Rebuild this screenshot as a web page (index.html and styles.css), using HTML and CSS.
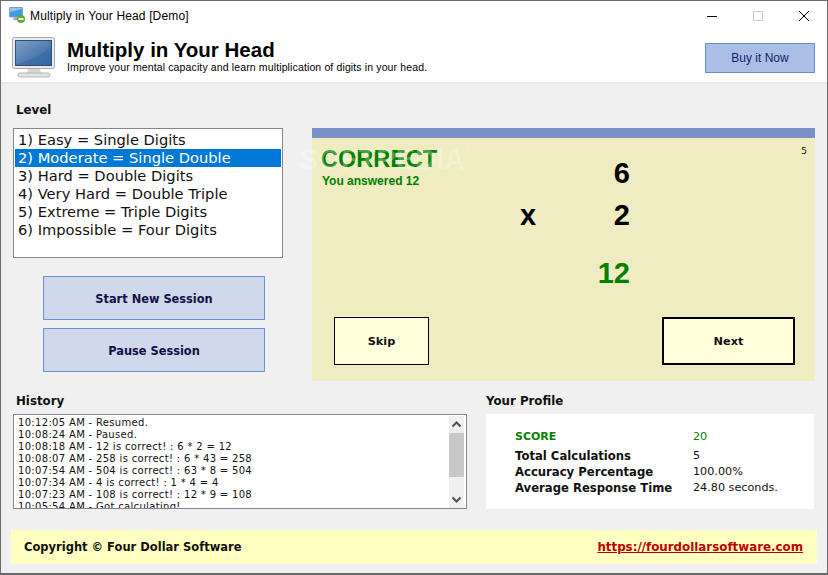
FILE: index.html
```html
<!DOCTYPE html>
<html lang="en">
<head>
<meta charset="utf-8">
<title>Multiply in Your Head [Demo]</title>
<link rel="stylesheet" href="styles.css">
</head>
<body>
<div class="window">
  <div class="titlebar">
    <svg class="app-icon" width="20" height="20" viewBox="0 0 20 20">
      <rect x="0" y="1" width="14" height="10.5" rx="1" fill="#8e9aa8"/>
      <rect x="1" y="2" width="12" height="8.5" fill="#3f9ae8"/>
      <path d="M1 6 L13 3 V2 H1Z" fill="#8cc4f2"/>
      <path d="M5 11.5H10L11 14H4Z" fill="#9aa4ae"/>
      <circle cx="12" cy="13" r="4" fill="#5fae2e"/>
      <rect x="9.5" y="12" width="5" height="2" fill="#fff"/>
    </svg>
    <span class="title-text">Multiply in Your Head [Demo]</span>
    <div class="win-controls">
      <svg width="12" height="12" viewBox="0 0 12 12"><path d="M1 6.5H11" stroke="#000" stroke-width="1"/></svg>
      <svg width="12" height="12" viewBox="0 0 12 12"><rect x="1.5" y="1.5" width="9" height="9" fill="none" stroke="#ccc"/></svg>
      <svg width="12" height="12" viewBox="0 0 12 12"><path d="M1 1L11 11M11 1L1 11" stroke="#000" stroke-width="1"/></svg>
    </div>
  </div>
  <header class="header">
    <svg class="monitor" width="44" height="42" viewBox="0 0 44 42">
      <defs>
        <linearGradient id="scr" x1="0" y1="0" x2="1" y2="1">
          <stop offset="0" stop-color="#7fa2c8"/>
          <stop offset="1" stop-color="#2d5f9c"/>
        </linearGradient>
      </defs>
      <rect x="0.5" y="0.5" width="42" height="31" rx="2" fill="#ececec" stroke="#a8a8a8"/>
      <rect x="3.5" y="3.5" width="36" height="25" fill="url(#scr)" stroke="#2c4f7e"/>
      <path d="M4 27 C18 24 30 18 39 10 V28 H4Z" fill="#3a6ba8" opacity=".7"/>
      <path d="M16 32H28L29 36H15Z" fill="#d8d8d8"/>
      <rect x="6" y="36" width="32" height="4" rx="2" fill="#e4e4e4" stroke="#b4b4b4"/>
    </svg>
    <div class="head-text">
      <h1 class="app-name">Multiply in Your Head</h1>
      <p class="tagline">Improve your mental capacity and learn multiplication of digits in your head.</p>
    </div>
    <button class="buy">Buy it Now</button>
  </header>
  <main class="content">
    <section class="top">
      <div class="left">
        <h2 class="label level-label">Level</h2>
        <ul class="levels">
          <li>1) Easy = Single Digits</li>
          <li class="selected">2) Moderate = Single Double</li>
          <li>3) Hard = Double Digits</li>
          <li>4) Very Hard = Double Triple</li>
          <li>5) Extreme = Triple Digits</li>
          <li>6) Impossible = Four Digits</li>
        </ul>
        <div class="session">
          <button class="session-btn">Start New Session</button>
          <button class="session-btn">Pause Session</button>
        </div>
      </div>
      <div class="game">
        <div class="game-bar"></div>
        <div class="game-body">
          <div class="count">5</div>
          <div class="result">
            <div class="correct">CORRECT</div>
            <div class="answered">You answered 12</div>
          </div>
          <div class="sum">
            <span class="n top-n">6</span>
            <span class="op">x</span>
            <span class="n mid-n">2</span>
            <span class="n answer">12</span>
          </div>
          <div class="game-actions">
            <button class="skip">Skip</button>
            <button class="next">Next</button>
          </div>
          <div class="watermark">SOFTPEDIA<sup class="reg">®</sup></div>
        </div>
      </div>
    </section>
    <section class="bottom">
      <div class="history">
        <h2 class="label">History</h2>
        <div class="log">
          <div class="log-lines">
            <div>10:12:05 AM - Resumed.</div>
            <div>10:08:24 AM - Paused.</div>
            <div>10:08:18 AM - 12 is correct! : 6 * 2 = 12</div>
            <div>10:08:07 AM - 258 is correct! : 6 * 43 = 258</div>
            <div>10:07:54 AM - 504 is correct! : 63 * 8 = 504</div>
            <div>10:07:34 AM - 4 is correct! : 1 * 4 = 4</div>
            <div>10:07:23 AM - 108 is correct! : 12 * 9 = 108</div>
            <div>10:05:54 AM - Got calculating!</div>
          </div>
          <div class="scrollbar">
            <svg width="15" height="17" viewBox="0 0 15 17"><path d="M3.5 10.5L7.5 6.5L11.5 10.5" fill="none" stroke="#505050" stroke-width="2"/></svg>
            <div class="thumb"></div>
            <svg class="down" width="15" height="17" viewBox="0 0 15 17"><path d="M3.5 6.5L7.5 10.5L11.5 6.5" fill="none" stroke="#505050" stroke-width="2"/></svg>
          </div>
        </div>
      </div>
      <div class="profile">
        <h2 class="label">Your Profile</h2>
        <dl class="stats">
          <dt class="score">SCORE</dt><dd class="score-val">20</dd>
          <dt>Total Calculations</dt><dd>5</dd>
          <dt>Accuracy Percentage</dt><dd>100.00%</dd>
          <dt>Average Response Time</dt><dd>24.80 seconds.</dd>
        </dl>
      </div>
    </section>
    <footer class="footer">
      <span>Copyright © Four Dollar Software</span>
      <a class="link" href="#">https://fourdollarsoftware.com</a>
    </footer>
  </main>
</div>
</body>
</html>
```
FILE: styles.css
```css
* { box-sizing: border-box; }
html, body { margin: 0; padding: 0; }
body { width: 828px; height: 575px; overflow: hidden; font-family: "DejaVu Sans", sans-serif; color: #000; }
button { font-family: inherit; cursor: pointer; padding: 0; }
h1, h2, p, ul, dl, dd { margin: 0; padding: 0; }

.window {
  width: 828px; height: 575px; display: flex; flex-direction: column;
  background: #f0f0f0; border: 1px solid #6a6a6a; border-bottom-width: 2px;
}
.titlebar {
  height: 30px; flex: none; display: flex; align-items: center; background: #fff; padding-left: 8px;
}
.app-icon { margin-right: 1px; margin-top: -1px; }
.title-text { font: 12px "Liberation Sans", sans-serif; color: #000; letter-spacing: .14px; }
.win-controls { margin-left: auto; display: flex; gap: 34px; padding-right: 17px; margin-top: -1px; }
.win-controls svg { display: block; }

.header {
  height: 53px; flex: none; display: flex; align-items: flex-start; background: #fff;
  border-bottom: 2px solid #e8e8e8; padding: 6px 12px 0 11px;
}
.monitor { flex: none; margin-right: 11px; }
.head-text { flex: 1; padding-top: 1px; }
.app-name { font: bold 20.5px/24px "Liberation Sans", sans-serif; }
.tagline { font: 10.5px/12px "Liberation Sans", sans-serif; letter-spacing: .13px; margin-top: -1px; }
.buy {
  width: 110px; height: 30px; margin-top: 6px; background: #a9bfe6; border: 1px solid #6a8bd0;
  color: #1a1a6a; font: 12px "Liberation Sans", sans-serif;
}

.content { flex: 1; display: flex; flex-direction: column; }
.top { display: flex; height: 298px; padding: 0 12px; flex: none; }
.left { width: 299px; flex: none; }
.label { font-size: 11.8px; line-height: 14px; font-weight: bold; color: #111; }
.level-label { margin: 19px 0 0 3px; }
.levels {
  list-style: none; width: 270px; height: 130px; margin-top: 11px; background: #fff;
  border: 1px solid #82878f; padding: 2px 1px;
  font-size: 14.67px; line-height: 18px; color: #111;
}
.levels li { padding-left: 3px; }
.levels .selected { background: #0078d7; color: #fff; }
.session { display: flex; flex-direction: column; gap: 8px; padding: 18px 0 0 30px; }
.session-btn {
  width: 222px; height: 44px; padding-top: 1px; background: #d0d8ec; border: 1px solid #6d8fd6;
  color: #101048; font-size: 11.4px; font-weight: bold;
}

.game { width: 503px; flex: none; margin-top: 44px; height: 253px; display: flex; flex-direction: column; }
.game-bar { height: 10px; background: #7a90c9; flex: none; }
.game-body { flex: 1; position: relative; background: #eeecc0; }
.watermark {
  position: absolute; left: -13px; top: 3px; font: bold 29px/36px "Liberation Sans", sans-serif;
  color: rgba(255, 255, 255, .28); white-space: nowrap; pointer-events: none;
}
.reg { font-size: 8px; font-weight: normal; vertical-align: top; line-height: 20px; }
.count { position: absolute; right: 8px; top: 7px; font-size: 9.5px; line-height: 12px; color: #222; }
.result { padding: 8px 0 0 9px; height: 50px; }
.correct { font: bold 23.5px/26px "Liberation Sans", sans-serif; color: #008000; }
.answered { font: bold 12px/14px "Liberation Sans", sans-serif; color: #008000; margin: 2px 0 0 1px; }
.sum {
  position: absolute; left: 0; top: 0; width: 318px; display: grid;
  grid-template-columns: 190px 52px 76px; grid-template-rows: 42px 42px 74px;
  padding-top: 14px; font: bold 29px/42px "Liberation Sans", sans-serif;
}
.n { grid-column: 3; text-align: right; align-self: center; }
.op { grid-column: 2; grid-row: 2; text-align: center; align-self: center; }
.top-n { grid-row: 1; }
.mid-n { grid-row: 2; }
.answer { grid-row: 3; color: #008000; white-space: nowrap; }
.game-actions {
  position: absolute; left: 22px; right: 20px; bottom: 16px; display: flex; justify-content: space-between; align-items: stretch;
}
.skip, .next { height: 48px; background: #ffffdc; color: #111; font-size: 11.3px; font-weight: bold; }
.skip { width: 95px; border: 1px solid #000; }
.next { width: 133px; border: 2px solid #000; }

.bottom { display: flex; padding: 12px 12px 0; height: 128px; flex: none; }
.history { width: 473px; flex: none; }
.history .label { margin-left: 3px; }
.log {
  width: 454px; height: 95px; margin-top: 6px; border: 1px solid #82878f; background: #fff;
  display: flex; overflow: hidden;
}
.log-lines { flex: 1; padding: 2px 0 0 4px; font-size: 10px; letter-spacing: .32px; line-height: 12px; color: #111; white-space: nowrap; overflow: hidden; }
.scrollbar { width: 15px; flex: none; margin: 1px 2px 0 0; background: #f0f0f0; display: flex; flex-direction: column; }
.scrollbar svg { display: block; flex: none; }
.scrollbar .down { margin-top: auto; }
.thumb { height: 44px; background: #c8c8c8; flex: none; }
.profile { flex: 1; }
.stats {
  width: 328px; height: 95px; margin-top: 6px; background: #fff; padding: 15px 0 0 29px;
  display: grid; grid-template-columns: 178px 1fr; grid-template-rows: 19px 16px 16px 16px; align-content: start;
  font-size: 11.2px; line-height: 16px; color: #111;
}
.stats dt { font-weight: bold; font-size: 11.65px; }
.stats .score { color: #008000; font-size: 11px; }
.stats .score-val { color: #008000; }

.footer {
  width: 806px; height: 34px; margin: 20px 0 0 10px; flex: none; background: #ffffc0;
  display: flex; justify-content: space-between; align-items: center; padding: 0 14px 0 13px;
  font-size: 11.5px; font-weight: bold; color: #111;
}
.link { color: #c00000; text-decoration: underline; font-size: 11.85px; }
```
